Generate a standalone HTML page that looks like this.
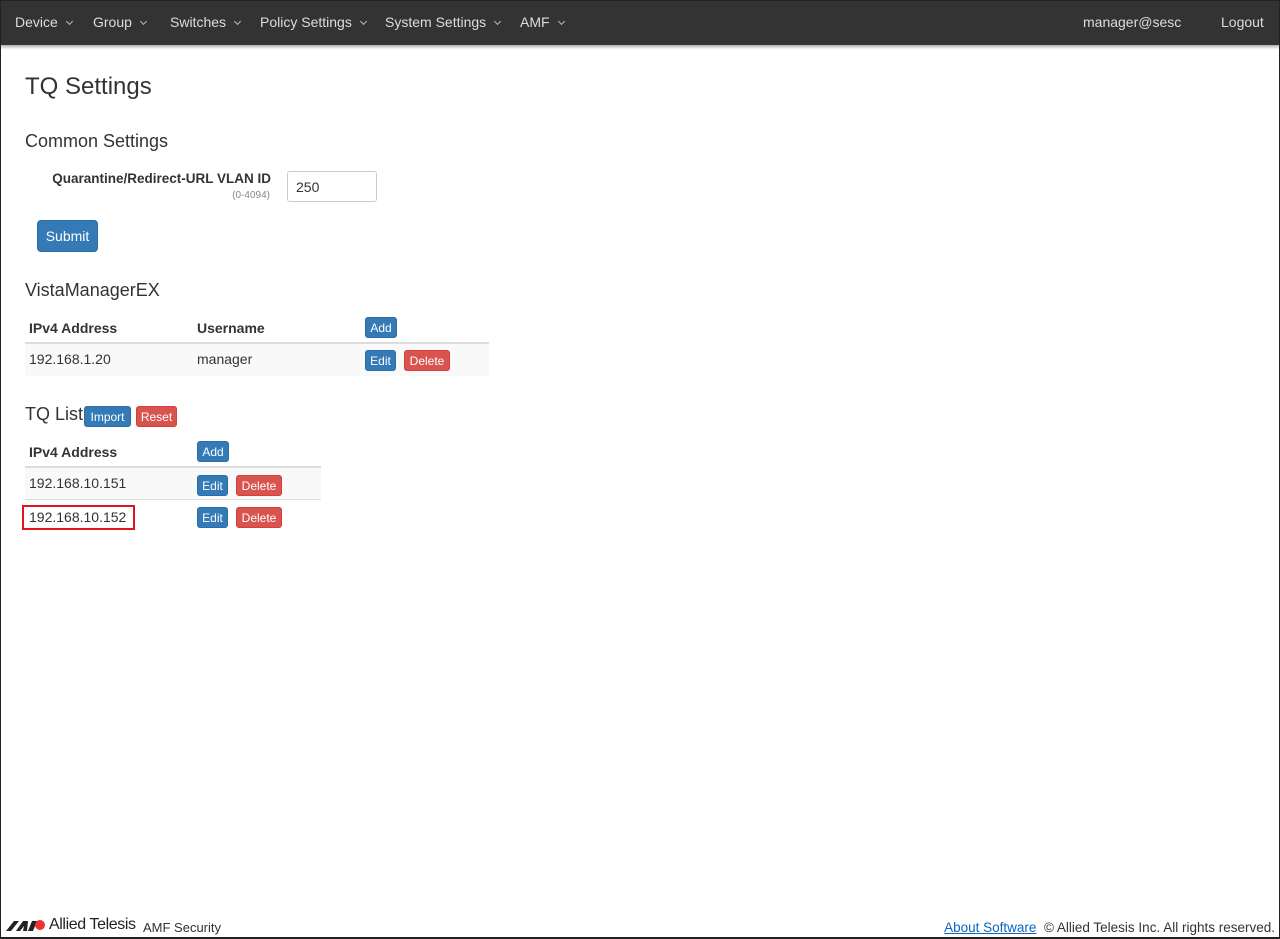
<!DOCTYPE html>
<html><head><meta charset="utf-8"><style>
*{box-sizing:border-box;margin:0;padding:0}
body{width:1280px;height:939px;position:relative;background:#fff;font-family:"Liberation Sans",sans-serif;color:#333;overflow:hidden;font-size:14px}
.frame{position:absolute;left:0;top:0;width:1280px;height:939px;border:1px solid #222;border-bottom:2px solid #222;pointer-events:none}
.nav{position:absolute;left:0;top:0;width:1280px;height:45px;background:#333;box-shadow:0 2px 3px rgba(0,0,0,.35)}
.nav .i{position:absolute;top:14px;color:#ddd;font-size:14px;white-space:nowrap}
.car{display:inline-block;width:5px;height:5px;border-right:1px solid #bbb;border-bottom:1px solid #bbb;transform:rotate(45deg);margin-left:9px;position:relative;top:-3px}
.a{position:absolute;white-space:nowrap}
.btn{position:absolute;color:#fff;font-size:12px;border-radius:3px;text-align:center;line-height:20px;height:21px}
.b{background:#337ab7;border:1px solid #2e6da4}
.r{background:#d9534f;border:1px solid #d43f3a}
</style></head><body>
<div class="nav">
<div class="i" style="left:15px">Device<span class="car"></span></div>
<div class="i" style="left:93px">Group<span class="car"></span></div>
<div class="i" style="left:170px">Switches<span class="car"></span></div>
<div class="i" style="left:260px">Policy Settings<span class="car"></span></div>
<div class="i" style="left:385px">System Settings<span class="car"></span></div>
<div class="i" style="left:520px">AMF<span class="car"></span></div>
<div class="i" style="left:1083px">manager@sesc</div>
<div class="i" style="left:1221px">Logout</div>
</div>
<div class="a" style="left:25px;top:73px;font-size:24px">TQ Settings</div>
<div class="a" style="left:25px;top:131px;font-size:18px">Common Settings</div>
<div class="a" style="right:1009px;top:171px;font-weight:bold;font-size:13.5px">Quarantine/Redirect-URL VLAN ID</div>
<div class="a" style="right:1010px;top:190px;font-size:10px;color:#888">(0-4094)</div>
<div class="a" style="left:287px;top:171px;width:90px;height:31px;border:1px solid #ccc;border-radius:3px;padding:7px 8px;font-size:14px">250</div>
<div class="btn b" style="left:37px;top:220px;width:61px;height:32px;line-height:30px;font-size:14px;border-radius:4px">Submit</div>
<div class="a" style="left:25px;top:280px;font-size:18px">VistaManagerEX</div>
<div class="a" style="left:29px;top:320px;font-weight:bold">IPv4 Address</div>
<div class="a" style="left:197px;top:320px;font-weight:bold">Username</div>
<div class="btn b" style="left:365px;top:317px;width:32px">Add</div>
<div class="a" style="left:25px;top:342px;width:464px;height:34px;background:#f9f9f9;border-top:2px solid #ddd"></div>
<div class="a" style="left:29px;top:351px">192.168.1.20</div>
<div class="a" style="left:197px;top:351px">manager</div>
<div class="btn b" style="left:365px;top:350px;width:31px">Edit</div>
<div class="btn r" style="left:404px;top:350px;width:46px">Delete</div>
<div class="a" style="left:25px;top:404px;font-size:18px">TQ List</div>
<div class="btn b" style="left:84px;top:406px;width:47px">Import</div>
<div class="btn r" style="left:136px;top:406px;width:41px">Reset</div>
<div class="a" style="left:29px;top:444px;font-weight:bold">IPv4 Address</div>
<div class="btn b" style="left:197px;top:441px;width:32px">Add</div>
<div class="a" style="left:25px;top:466px;width:296px;height:34px;background:#f9f9f9;border-top:2px solid #ddd;border-bottom:1px solid #ddd"></div>
<div class="a" style="left:29px;top:475px">192.168.10.151</div>
<div class="btn b" style="left:197px;top:475px;width:31px">Edit</div>
<div class="btn r" style="left:236px;top:475px;width:46px">Delete</div>
<div class="a" style="left:22px;top:505px;width:113px;height:25px;border:2px solid #e0141e"></div>
<div class="a" style="left:29px;top:509px">192.168.10.152</div>
<div class="btn b" style="left:197px;top:507px;width:31px">Edit</div>
<div class="btn r" style="left:236px;top:507px;width:46px">Delete</div>
<svg class="a" style="left:6px;top:918px" width="40" height="14" viewBox="0 0 40 14"><polygon points="0,13 8,3 13,3 5,13" fill="#222"/><polygon points="10,13 17,3 22,3 21,13 17,13 18,8 14,13" fill="#222"/><polygon points="22,13 26,3 31,3 27,13" fill="#222"/><circle cx="34" cy="7" r="5" fill="#e33"/></svg>
<div class="a" style="left:49px;top:916px;font-size:16px;color:#222;letter-spacing:-0.4px">Allied Telesis</div>
<div class="a" style="left:143px;top:920px;font-size:13px">AMF Security</div>
<div class="a" style="right:5px;top:920px;font-size:13.5px"><span style="color:#0a66c2;text-decoration:underline">About Software</span>&nbsp; © Allied Telesis Inc. All rights reserved.</div>
<div class="frame"></div>
</body></html>
